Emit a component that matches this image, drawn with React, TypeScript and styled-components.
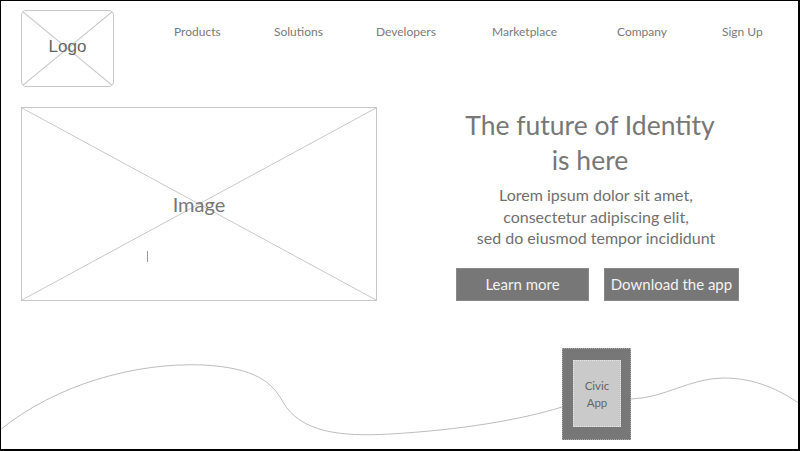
import React from "react";
import styled, { createGlobalStyle } from "styled-components";

const Global = createGlobalStyle`
  html, body { margin: 0; padding: 0; background: #fff; }
  body { width: 800px; height: 451px; overflow: hidden; font-family: Lato, "Noto Sans", sans-serif; }
  * { box-sizing: border-box; }
`;

const Frame = styled.div`
  position: relative;
  width: 800px;
  height: 451px;
  border-style: solid;
  border-color: #000;
  border-width: 1px 2px 2px 1px;
  display: flex;
  flex-direction: column;
  overflow: hidden;
  background: #fff;
`;

const Header = styled.header`
  display: flex;
  align-items: flex-start;
  padding: 9px 0 0 20px;
`;

const Placeholder = styled.div<{ $w: number; $h: number; $radius?: number }>`
  position: relative;
  flex: none;
  width: ${(p) => p.$w}px;
  height: ${(p) => p.$h}px;
  border: 1px solid #c8c8c8;
  border-radius: ${(p) => p.$radius ?? 0}px;
  display: flex;
  align-items: center;
  justify-content: center;
  overflow: hidden;
`;

const Cross = styled.svg`
  position: absolute;
  inset: 0;
  width: 100%;
  height: 100%;
`;

const LogoText = styled.span`
  position: relative;
  font-family: "Liberation Sans", Arial, sans-serif;
  font-size: 17px;
  color: #666;
  margin-top: -3px;
`;

const ImageText = styled.span`
  position: relative;
  font-size: 20px;
  color: #777;
`;

const Caret = styled.span`
  position: absolute;
  left: 125px;
  top: 143px;
  width: 1px;
  height: 11px;
  background: #999;
`;

const Nav = styled.nav`
  display: grid;
  grid-template-columns: 100px 102px 116px 125px 105px auto;
  margin-left: 60px;
  padding-top: 14px;
`;

const NavLink = styled.a`
  font-size: 12px;
  line-height: 16px;
  color: #7a7a7a;
  text-decoration: none;
  white-space: nowrap;
`;

const Hero = styled.section`
  display: flex;
  align-items: flex-start;
  padding: 20px 0 0 20px;
`;

const HeroText = styled.div`
  width: 300px;
  margin-left: 69px;
  display: flex;
  flex-direction: column;
  align-items: center;
  text-align: center;
`;

const Title = styled.h1`
  margin: 1px 12px 0 0;
  font-size: 26.5px;
  font-weight: 400;
  line-height: 35px;
  color: #777;
`;

const Lead = styled.p`
  margin: 6px 0 0;
  font-size: 16px;
  line-height: 21.5px;
  color: #707070;
`;

const Buttons = styled.div`
  align-self: stretch;
  display: flex;
  gap: 15px;
  padding-left: 10px;
  margin-top: 19px;
`;

const Button = styled.button<{ $w: number }>`
  width: ${(p) => p.$w}px;
  height: 33px;
  background: #777;
  border: 1px solid #8a8a8a;
  color: #f2f2f2;
  font-family: Lato, "Noto Sans", sans-serif;
  font-size: 15px;
  padding: 0;
  cursor: pointer;
`;

const Bottom = styled.section`
  position: relative;
  flex: 1;
  padding: 47px 0 0 561px;
`;

const Wave = styled.svg`
  position: absolute;
  left: 0;
  top: 0;
  width: 797px;
  height: 148px;
`;

const Phone = styled.div`
  position: relative;
  width: 69px;
  height: 92px;
  background: #777;
  border: 1px dotted #a8a8a8;
  padding: 11px 9px 12px 10px;
`;

const Screen = styled.div`
  width: 100%;
  height: 100%;
  background: #cacaca;
  border: 1px dotted #e6e6e6;
  display: flex;
  align-items: center;
  justify-content: center;
  text-align: center;
  font-size: 11.5px;
  line-height: 17px;
  color: #666;
`;

const XLines = () => (
  <Cross viewBox="0 0 100 100" preserveAspectRatio="none">
    <line x1="0" y1="0" x2="100" y2="100" stroke="#c8c8c8" strokeWidth="1" vectorEffect="non-scaling-stroke" />
    <line x1="100" y1="0" x2="0" y2="100" stroke="#c8c8c8" strokeWidth="1" vectorEffect="non-scaling-stroke" />
  </Cross>
);

const navItems = ["Products", "Solutions", "Developers", "Marketplace", "Company", "Sign Up"];

export default function App() {
  return (
    <>
      <Global />
      <Frame>
        <Header>
          <Placeholder $w={93} $h={77} $radius={5}>
            <XLines />
            <LogoText>Logo</LogoText>
          </Placeholder>
          <Nav>
            {navItems.map((n) => (
              <NavLink key={n}>{n}</NavLink>
            ))}
          </Nav>
        </Header>
        <Hero>
          <Placeholder $w={356} $h={194}>
            <XLines />
            <ImageText>Image</ImageText>
            <Caret />
          </Placeholder>
          <HeroText>
            <Title>
              The future of Identity
              <br />
              is here
            </Title>
            <Lead>
              Lorem ipsum dolor sit amet,
              <br />
              consectetur adipiscing elit,
              <br />
              sed do eiusmod tempor incididunt
            </Lead>
            <Buttons>
              <Button $w={133}>Learn more</Button>
              <Button $w={135}>Download the app</Button>
            </Buttons>
          </HeroText>
        </Hero>
        <Bottom>
          <Wave viewBox="1 301 797 148">
            <path
              d="M0,430 C55,385 135,362 204,365 C255,368 272,382 283,402 C300,432 340,437 390,434 C460,430 520,420 562,407"
              fill="none"
              stroke="#bdbdbd"
              strokeWidth="1"
            />
            <path
              d="M631,399 C665,398 690,378 724,378 C755,378 780,390 800,404"
              fill="none"
              stroke="#bdbdbd"
              strokeWidth="1"
            />
          </Wave>
          <Phone>
            <Screen>
              Civic
              <br />
              App
            </Screen>
          </Phone>
        </Bottom>
      </Frame>
    </>
  );
}
